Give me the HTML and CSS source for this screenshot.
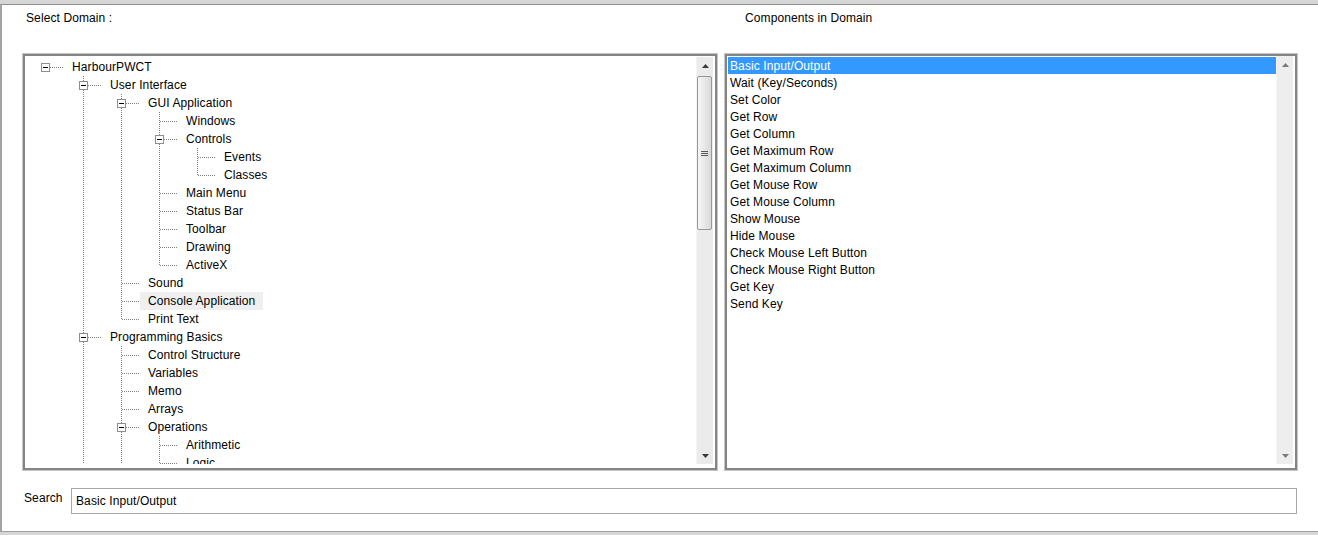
FILE: index.html
```html
<!DOCTYPE html>
<html lang="en">
<head>
<meta charset="utf-8">
<title>Select Domain</title>
<link rel="stylesheet" href="styles.css">
</head>
<body>
<div class="window">
  <div class="head">
    <div class="hlabel left">Select Domain :</div>
    <div class="hlabel right">Components in Domain</div>
  </div>
  <div class="panes">
    <div class="frame">
      <div class="well">
        <div class="tree">
          <div class="row"><span class="c r"><i class="box"></i></span><span class="lbl">HarbourPWCT</span></div>
          <div class="row"><span class="c"></span><span class="c t"><i class="box"></i></span><span class="lbl">User Interface</span></div>
          <div class="row"><span class="c"></span><span class="c v"></span><span class="c t"><i class="box"></i></span><span class="lbl">GUI Application</span></div>
          <div class="row"><span class="c"></span><span class="c v"></span><span class="c v"></span><span class="c t"></span><span class="lbl">Windows</span></div>
          <div class="row"><span class="c"></span><span class="c v"></span><span class="c v"></span><span class="c t"><i class="box"></i></span><span class="lbl">Controls</span></div>
          <div class="row"><span class="c"></span><span class="c v"></span><span class="c v"></span><span class="c v"></span><span class="c t"></span><span class="lbl">Events</span></div>
          <div class="row"><span class="c"></span><span class="c v"></span><span class="c v"></span><span class="c v"></span><span class="c l"></span><span class="lbl">Classes</span></div>
          <div class="row"><span class="c"></span><span class="c v"></span><span class="c v"></span><span class="c t"></span><span class="lbl">Main Menu</span></div>
          <div class="row"><span class="c"></span><span class="c v"></span><span class="c v"></span><span class="c t"></span><span class="lbl">Status Bar</span></div>
          <div class="row"><span class="c"></span><span class="c v"></span><span class="c v"></span><span class="c t"></span><span class="lbl">Toolbar</span></div>
          <div class="row"><span class="c"></span><span class="c v"></span><span class="c v"></span><span class="c t"></span><span class="lbl">Drawing</span></div>
          <div class="row"><span class="c"></span><span class="c v"></span><span class="c v"></span><span class="c l"></span><span class="lbl">ActiveX</span></div>
          <div class="row"><span class="c"></span><span class="c v"></span><span class="c t"></span><span class="lbl">Sound</span></div>
          <div class="row"><span class="c"></span><span class="c v"></span><span class="c t"></span><span class="lbl hot">Console Application</span></div>
          <div class="row"><span class="c"></span><span class="c v"></span><span class="c l"></span><span class="lbl">Print Text</span></div>
          <div class="row"><span class="c"></span><span class="c t"><i class="box"></i></span><span class="lbl">Programming Basics</span></div>
          <div class="row"><span class="c"></span><span class="c v"></span><span class="c t"></span><span class="lbl">Control Structure</span></div>
          <div class="row"><span class="c"></span><span class="c v"></span><span class="c t"></span><span class="lbl">Variables</span></div>
          <div class="row"><span class="c"></span><span class="c v"></span><span class="c t"></span><span class="lbl">Memo</span></div>
          <div class="row"><span class="c"></span><span class="c v"></span><span class="c t"></span><span class="lbl">Arrays</span></div>
          <div class="row"><span class="c"></span><span class="c v"></span><span class="c t"><i class="box"></i></span><span class="lbl">Operations</span></div>
          <div class="row"><span class="c"></span><span class="c v"></span><span class="c v"></span><span class="c t"></span><span class="lbl">Arithmetic</span></div>
          <div class="row"><span class="c"></span><span class="c v"></span><span class="c v"></span><span class="c t"></span><span class="lbl">Logic</span></div>
        </div>
        <div class="sb">
          <div class="sbtn"><svg width="7" height="4" viewBox="0 0 7 4"><polygon points="3.5,0 7,4 0,4"/></svg></div>
          <div class="thumb"><span class="grip"></span></div>
          <div class="track"></div>
          <div class="sbtn"><svg width="7" height="4" viewBox="0 0 7 4"><polygon points="0,0 7,0 3.5,4"/></svg></div>
        </div>
      </div>
    </div>
    <div class="frame">
      <div class="well">
        <div class="list">
          <div class="item sel">Basic Input/Output</div>
          <div class="item">Wait (Key/Seconds)</div>
          <div class="item">Set Color</div>
          <div class="item">Get Row</div>
          <div class="item">Get Column</div>
          <div class="item">Get Maximum Row</div>
          <div class="item">Get Maximum Column</div>
          <div class="item">Get Mouse Row</div>
          <div class="item">Get Mouse Column</div>
          <div class="item">Show Mouse</div>
          <div class="item">Hide Mouse</div>
          <div class="item">Check Mouse Left Button</div>
          <div class="item">Check Mouse Right Button</div>
          <div class="item">Get Key</div>
          <div class="item">Send Key</div>
        </div>
        <div class="sb dis">
          <div class="sbtn"><svg width="7" height="4" viewBox="0 0 7 4"><polygon points="3.5,0 7,4 0,4"/></svg></div>
          <div class="track"></div>
          <div class="sbtn"><svg width="7" height="4" viewBox="0 0 7 4"><polygon points="0,0 7,0 3.5,4"/></svg></div>
        </div>
      </div>
    </div>
  </div>
  <div class="search">
    <label class="slabel" for="q">Search</label>
    <input id="q" class="sinput" type="text" value="Basic Input/Output" readonly>
  </div>
</div>
</body>
</html>
```

FILE: styles.css
```css
:root {
  --dot: #808080;
  --dv: repeating-linear-gradient(to bottom, var(--dot) 0 1px, transparent 1px 2px);
  --dh: repeating-linear-gradient(to right, var(--dot) 0 1px, transparent 1px 2px);
}

* { box-sizing: border-box; }

html, body {
  margin: 0;
  padding: 0;
}

body {
  width: 1318px;
  height: 535px;
  overflow: hidden;
  background: #d6d6d6;
  font-family: "Liberation Sans", Arial, sans-serif;
  font-size: 12px;
  letter-spacing: 0.1px;
  color: #000;
}

.window {
  margin-top: 4px;
  height: 528px;
  background: #fff;
  border-top: 1px solid #8f8f8f;
  border-left: 2px solid #a3a3a3;
  border-bottom: 1px solid #a0a0a0;
  padding: 6px 0 0 20px;
  display: flex;
  flex-direction: column;
}

.head {
  display: grid;
  grid-template-columns: 696px 574px;
  column-gap: 6px;
  line-height: 14px;
}
.hlabel.left { padding-left: 4px; }
.hlabel.right { padding-left: 21px; }

.panes {
  flex: none;
  display: grid;
  grid-template-columns: 696px 574px;
  grid-template-rows: 418px;
  column-gap: 6px;
  margin-top: 28px;
  height: 418px;
}

.frame {
  border: 1px solid #c6c6c6;
  height: 418px;
  min-height: 0;
  overflow: hidden;
}
.well {
  border: 2px solid #858585;
  background: #fff;
  height: 100%;
  display: flex;
  overflow: hidden;
}

/* tree */
.tree {
  flex: 1;
  min-height: 0;
  overflow: hidden;
  padding: 2px 0 0 1px;
  margin-bottom: 4px;
}
.row {
  display: flex;
  height: 18px;
}
.c {
  flex: none;
  width: 38px;
  height: 18px;
  display: flex;
  align-items: flex-start;
  background-repeat: no-repeat;
}
.c.v {
  background-image: var(--dv);
  background-size: 1px 18px;
  background-position: 19px 0;
}
.c.t {
  background-image: var(--dv), var(--dh);
  background-size: 1px 18px, 18px 1px;
  background-position: 19px 0, 20px 9px;
}
.c.l {
  background-image: var(--dv), var(--dh);
  background-size: 1px 10px, 18px 1px;
  background-position: 19px 0, 20px 9px;
}
.c.r {
  background-image: var(--dh);
  background-size: 18px 1px;
  background-position: 20px 9px;
}
.box {
  width: 9px;
  height: 9px;
  margin: 5px 0 0 15px;
  border: 1px solid #8e8e8e;
  background: #fff;
  display: flex;
  align-items: center;
  justify-content: center;
}
.box::before {
  content: "";
  width: 5px;
  height: 1px;
  background: #000;
}
.lbl {
  line-height: 18px;
  padding: 0 8px;
  white-space: nowrap;
}
.lbl.hot { background: #efefef; }

/* scrollbars */
.sb {
  flex: none;
  width: 17px;
  margin: 1px 2px 4px 0;
  background: #ebebeb;
  border-left: 1px solid #f4f4f4;
  display: flex;
  flex-direction: column;
}
.sb.dis {
  margin-top: 0;
  background: #eeeeee;
}
.sbtn {
  flex: none;
  height: 17px;
  display: flex;
  align-items: center;
  justify-content: center;
}
.sbtn svg { fill: #3a3a3a; display: block; }
.sb.dis .sbtn svg { fill: #7a7a7a; }
.thumb {
  flex: none;
  height: 154px;
  margin: 2px 1px 0 0;
  border: 1px solid #979797;
  border-radius: 2px;
  background: linear-gradient(to right, #f6f6f6, #e8e8e8 50%, #d9d9d9);
  display: flex;
  align-items: center;
  justify-content: center;
}
.grip {
  width: 7px;
  height: 5px;
  background: repeating-linear-gradient(to bottom, #5a5a5a 0 1px, transparent 1px 2px);
}
.track { flex: 1; }

/* list */
.list {
  flex: 1;
  padding: 1px 0 0 1px;
}
.item {
  height: 17px;
  line-height: 19px;
  padding-left: 2px;
  white-space: nowrap;
  overflow: hidden;
}
.item.sel {
  background: #3399ff;
  color: #fff;
}

/* search */
.search {
  display: flex;
  align-items: flex-start;
  margin-top: 17px;
  padding-left: 2px;
}
.slabel {
  width: 47px;
  line-height: 14px;
  margin-top: 3px;
}
.sinput {
  width: 1226px;
  height: 26px;
  margin: 0;
  border: 1px solid #a8a8a8;
  padding: 0 4px;
  font-family: "Liberation Sans", Arial, sans-serif;
  font-size: 12px;
  letter-spacing: 0.1px;
  color: #000;
  background: #fff;
  outline: none;
}
```
